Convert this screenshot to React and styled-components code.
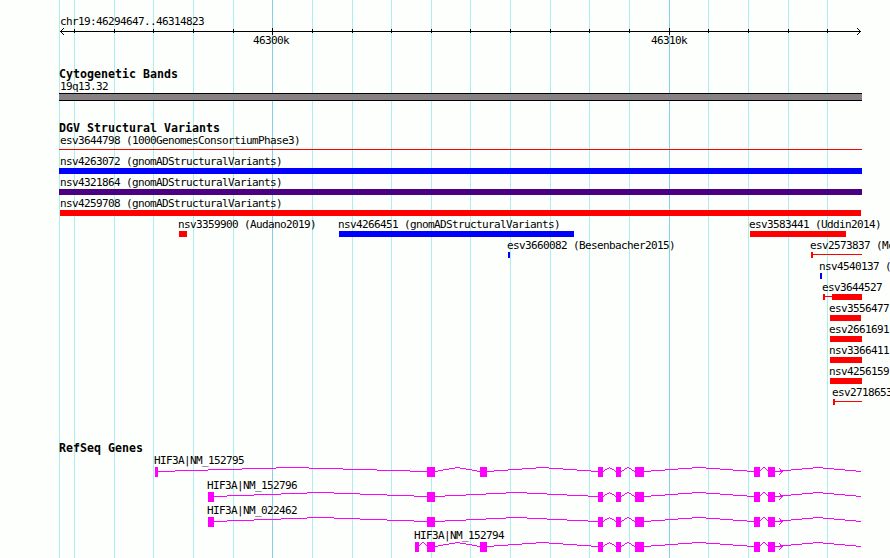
import React from "react";
import styled, { createGlobalStyle } from "styled-components";

const GlobalStyle = createGlobalStyle`
  body {
    margin: 0;
    background: #fdfffc;
  }
`;

const Browser = styled.div`
  position: relative;
  width: 890px;
  height: 558px;
  overflow: hidden;
  background: #fdfffc;
  color: #000000;
  font-family: "DejaVu Sans Mono", "Liberation Mono", monospace;
`;

const Grid = styled.svg`
  position: absolute;
  top: 0;
  left: 0;
`;

const Tracks = styled.main`
  position: relative;
  display: flex;
  flex-direction: column;
`;

const Track = styled.section`
  display: flex;
  flex-direction: column;
  height: ${(props) => props.$height}px;
`;

const Title = styled.h2`
  margin: 0 0 0 59px;
  height: 12px;
  font-size: 11.6px;
  line-height: 13px;
  font-weight: bold;
  letter-spacing: 0.016px;
  white-space: pre;
`;

// every feature of a row shares one grid cell and is moved along by its margin
const Row = styled.div`
  display: grid;
  flex: none;
  height: ${(props) => props.$height}px;
`;

const Feature = styled.div`
  grid-area: 1 / 1;
  display: flex;
  flex-direction: column;
`;

const Label = styled.span`
  margin-left: ${(props) => props.$x}px;
  height: 13px;
  font-size: 11px;
  line-height: 13px;
  letter-spacing: -0.622px;
  white-space: pre;
`;

const Tick = styled(Label)`
  margin-top: -1px;
`;

const Glyph = styled.div`
  display: flex;
  align-items: flex-start;
  height: 6px;
  margin-left: ${(props) => props.$x}px;
`;

const Bar = styled.div`
  width: ${(props) => props.$width}px;
  height: 6px;
  background: ${(props) => props.$color};
`;

const Line = styled(Bar)`
  height: 1px;
  margin-top: 2px;
`;

const Band = styled.div`
  box-sizing: border-box;
  width: 803px;
  height: 8px;
  margin-left: 59px;
  border: solid #000000;
  border-width: 1px 0;
  background: #878185;
`;

const Drawing = styled.svg`
  display: block;
  flex: none;
`;

const RED = "#ff0000";
const BLUE = "#0000ff";
const MAGENTA = "#ff00ff";

const minor = [
  59, 74, 114, 153, 193, 233, 312, 352, 391, 431, 470, 510, 550, 589, 629, 708,
  748, 788, 827,
];
const major = [272, 669];

// part: [start, end, thin]
const variants = [
  [{ name: "esv3644798 (1000GenomesConsortiumPhase3)", label: 60, color: RED, parts: [[59, 862, true]] }],
  [{ name: "nsv4263072 (gnomADStructuralVariants)", label: 60, color: BLUE, parts: [[59, 862]] }],
  [{ name: "nsv4321864 (gnomADStructuralVariants)", label: 60, color: "#4b0082", parts: [[59, 862]] }],
  [{ name: "nsv4259708 (gnomADStructuralVariants)", label: 60, color: RED, parts: [[60, 861]] }],
  [
    { name: "nsv3359900 (Audano2019)", color: RED, parts: [[179, 187]] },
    { name: "nsv4266451 (gnomADStructuralVariants)", color: BLUE, parts: [[339, 574]] },
    { name: "esv3583441 (Uddin2014)", color: RED, parts: [[750, 846]] },
  ],
  [
    { name: "esv3660082 (Besenbacher2015)", color: BLUE, parts: [[508, 510]] },
    { name: "esv2573837 (Mc", color: RED, parts: [[811, 813], [813, 862, true]] },
  ],
  [{ name: "nsv4540137 (", color: BLUE, parts: [[820, 822]] }],
  [{ name: "esv3644527", color: RED, parts: [[823, 825], [825, 832, true], [832, 862]] }],
  [{ name: "esv3556477", color: RED, parts: [[830, 861]] }],
  [{ name: "esv2661691", color: RED, parts: [[830, 862]] }],
  [{ name: "nsv3366411", color: RED, parts: [[830, 862]] }],
  [{ name: "nsv4256159", color: RED, parts: [[830, 862]] }],
  [{ name: "esv2718653", color: RED, parts: [[833, 835], [835, 862, true]] }],
];

const tail = [
  [598, 603],
  [616, 621],
  [635, 644],
  [754, 760],
  [768, 775],
];

const genes = [
  { name: "HIF3A|NM_152795", exons: [[155, 158], [427, 435], [480, 487], ...tail] },
  { name: "HIF3A|NM_152796", exons: [[208, 214], [427, 435], ...tail] },
  { name: "HIF3A|NM_022462", exons: [[208, 214], [427, 435], ...tail] },
  { name: "HIF3A|NM_152794", exons: [[415, 419], [427, 435], [480, 487], ...tail] },
];

// stepped one pixel line, up to the middle of the intron and down again
const intron = (from, to) => {
  const half = (to - from) / 2;
  let d = "";
  for (let x = from; x < to; x++) {
    const t = 1 - Math.abs(x + 0.5 - from - half) / half;
    d += `M${x} ${4 - Math.round(t * 4)}h1v1h-1z`;
  }
  return d;
};

const Variant = ({ name, label, color, parts }) => {
  const x = parts[0][0];
  return (
    <Feature>
      <Label $x={label || x - 1}>{name}</Label>
      <Glyph $x={x}>
        {parts.map(([start, end, thin]) =>
          thin ? (
            <Line key={start} $width={end - start} $color={color} />
          ) : (
            <Bar key={start} $width={end - start} $color={color} />
          )
        )}
      </Glyph>
    </Feature>
  );
};

const Gene = ({ name, exons }) => (
  <Row $height={25}>
    <Feature>
      <Label $x={exons[0][0] - 1}>{name}</Label>
      <Drawing width="890" height="10" fill={MAGENTA} shapeRendering="crispEdges">
        {exons.map(([start, end], i) => (
          <g key={start}>
            <rect x={start} y="0" width={end - start} height="10" />
            <path d={intron(end, i + 1 < exons.length ? exons[i + 1][0] : 861)} />
          </g>
        ))}
        <path d="M775 4h8v1h-8zM779 1h1v1h-1zM780 2h1v1h-1zM781 3h1v1h-1zM781 5h1v1h-1zM780 6h1v1h-1zM779 7h1v1h-1z" />
      </Drawing>
    </Feature>
  </Row>
);

const Ruler = () => (
  <Drawing width="890" height="7" shapeRendering="crispEdges">
    <rect x="60" y="3" width="801" height="1" />
    <path d="M61 2h1v1h-1zM62 1h1v1h-1zM63 0h1v1h-1zM61 4h1v1h-1zM62 5h1v1h-1zM63 6h1v1h-1z" />
    <path d="M859 2h1v1h-1zM858 1h1v1h-1zM857 0h1v1h-1zM859 4h1v1h-1zM858 5h1v1h-1zM857 6h1v1h-1z" />
    {minor.slice(1).map((x) => (
      <rect key={x} x={x} y="1" width="1" height="4" />
    ))}
    {major.map((x) => (
      <rect key={x} x={x} y="0" width="1" height="7" />
    ))}
  </Drawing>
);

const Overview = styled(Track)`
  padding-top: 15px;
  box-sizing: border-box;
`;

const App = () => {
  return (
    <>
      <GlobalStyle />
      <Browser>
        <Grid width="890" height="558" shapeRendering="crispEdges">
          {minor.map((x) => (
            <rect key={x} x={x} y="0" width="1" height="558" fill="#afeeee" />
          ))}
          {major.map((x) => (
            <rect key={x} x={x} y="0" width="1" height="558" fill="#87ceeb" />
          ))}
        </Grid>
        <Tracks>
          <Overview $height={68}>
            <Label $x={60}>chr19:46294647..46314823</Label>
            <Ruler />
            <Row $height={13}>
              <Feature>
                <Tick $x={253}>46300k</Tick>
              </Feature>
              <Feature>
                <Tick $x={651}>46310k</Tick>
              </Feature>
            </Row>
          </Overview>
          <Track $height={54}>
            <Title>Cytogenetic Bands</Title>
            <Label $x={60}>19q13.32</Label>
            <Band />
          </Track>
          <Track $height={320}>
            <Title>DGV Structural Variants</Title>
            {variants.map((row) => (
              <Row key={row[0].name} $height={21}>
                {row.map((item) => (
                  <Variant key={item.name} {...item} />
                ))}
              </Row>
            ))}
          </Track>
          <Track $height={116}>
            <Title>RefSeq Genes</Title>
            {genes.map((gene) => (
              <Gene key={gene.name} {...gene} />
            ))}
          </Track>
        </Tracks>
      </Browser>
    </>
  );
};

export default App;
